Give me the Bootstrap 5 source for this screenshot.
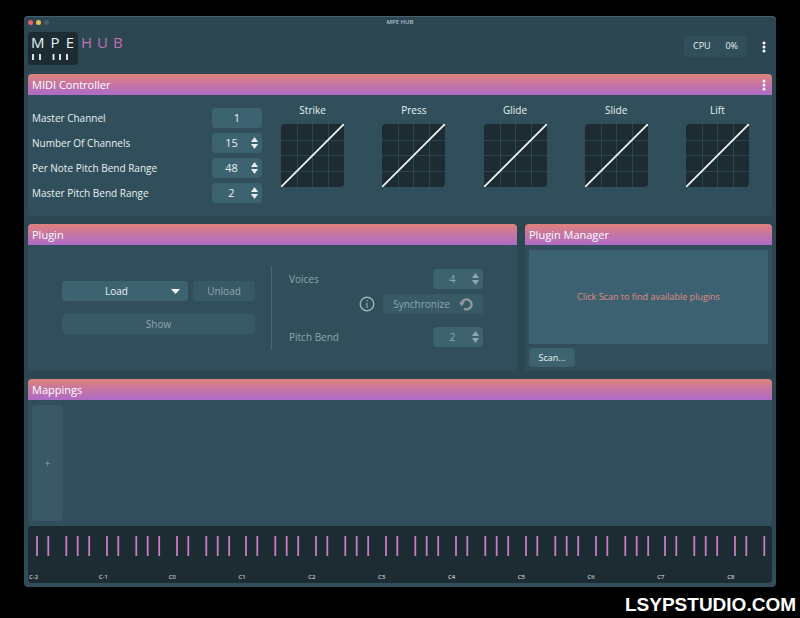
<!DOCTYPE html>
<html lang="en">
<head>
<meta charset="utf-8">
<meta name="viewport" content="width=device-width, initial-scale=1">
<title>MPE HUB</title>
<link rel="stylesheet" href="https://cdn.jsdelivr.net/npm/bootstrap@5.3.0/dist/css/bootstrap.min.css">
<style>
  :root { --ink:#e8f1f3; --dim:#8fa6ae; --field:#3d6370; --field-dim:#385a66; --panel:#304f5a; --shell:#2c4751; --dark:#1d2b32; }
  body { background:#000; color:var(--ink); font:10px/20px "Open Sans", "Noto Sans", sans-serif; }
  button, input, select { font:inherit; color:inherit; border:0; padding:0; background:none; }
  .stage { min-height:100vh; padding:16px 24px 0 24px; }
  .shell { background:linear-gradient(var(--shell) 90%, #304f5a); border-radius:4px; padding:0 4px 4px; box-shadow:inset 0 1px 0 #46616b; }
  .titlebar { height:12px; font-size:6px; line-height:12px; font-weight:600; display:grid; grid-template-columns:1fr auto 1fr; align-items:center; color:#b4c2c7; }
  .dots { gap:3px; }
  .dots i { width:5px; height:5px; border-radius:50%; }
  .brandbar { height:46px; padding-top:4px; }
  .logo-key { width:50px; height:33px; border-radius:4px; background:var(--dark); padding:0 4px 0 3px; }
  .logo-word { font:400 15px/21px "Open Sans", sans-serif; }
  .hub { margin:0 0 0 3px; gap:5px; color:#c070b4; }
  .cpu { height:21px; width:63px; border-radius:4px; background:var(--panel); padding:0 9px; font-size:9px; margin-right:13px; }
  .dots-btn { width:8px; height:14px; line-height:0; }
  .panel-box { background:var(--panel); border-radius:4px; overflow:hidden; }
  .panel-head { height:21px; padding:0 4px; background:linear-gradient(#e0817b, #c575a3 50%, #ae6bc8); color:#fff; }
  .panel-head h2 { font-size:11px; line-height:21px; font-weight:400; margin:0; }
  .stack { gap:8px; }
  .midi { height:121px; padding:13px 4px 0; }
  .params { width:230px; gap:5px; }
  .spin, .solo { width:50px; height:20px; border-radius:4px; background:var(--field); font-size:11px; }
  .solo { text-align:center; }
  .spin input { width:39px; height:20px; text-align:center; }
  .steps { width:7px; }
  .steps button { height:7px; line-height:0; display:block; }
  .curve { font-size:10px; margin-top:-8px; }
  .curve svg { display:block; margin-top:4px; }
  .duo { display:grid; grid-template-columns:489fr 247fr; }
  .plugin-body { height:126px; padding:21px 34px 0; }
  .loader { width:193px; padding-top:15px; gap:13px; }
  .pick { display:grid; width:126px; }
  .pick > * { grid-area:1/1; }
  .pick select { appearance:none; height:20px; border-radius:4px; background:var(--field); text-align:center; text-align-last:center; padding-right:17px; }
  .pick svg { justify-self:end; align-self:center; margin-right:8px; pointer-events:none; }
  .flat { height:20px; border-radius:4px; background:var(--field-dim); }
  .unload { width:62px; }
  .dim { color:var(--dim); }
  .rule { width:1px; height:84px; background:#4a6872; margin:0 17px 0 16px; }
  .voices { width:194px; padding-top:3px; }
  .voices .sync-row { margin:5px 0 13px; gap:8px; }
  .sync { width:100px; gap:9px; }
  .manager { height:126px; padding:5px 4px 0; }
  .found { height:94px; background:#3c6170; color:#e08c84; font-size:9px; }
  .scan { width:46px; height:19px; line-height:19px; margin-top:4px; border-radius:4px; background:var(--field); font-size:9px; }
  .maps { height:126px; padding:5px 4px 0; }
  .add { width:31px; height:116px; border-radius:4px; background:#385965; }
  .keys { height:57px; border-radius:4px; background:var(--dark); padding-top:10px; }
  .octave { flex:70 1 0; min-width:0; font-size:6px; line-height:10px; }
  .octave:last-child { flex-grow:46; }
  .octave svg { display:block; margin-bottom:16px; }
  .octave span { padding-left:1px; }
  .site { font:700 19px/31px "Liberation Sans", Arial, sans-serif; color:#fff; margin-right:-20px; padding-top:2px; }
</style>
<script src="https://cdn.jsdelivr.net/npm/bootstrap@5.3.0/dist/js/bootstrap.bundle.min.js"></script>
</head>
<body>
<svg width="0" height="0" class="position-absolute" aria-hidden="true">
  <symbol id="up" viewBox="0 0 7 5"><path d="M0 5 3.5 0 7 5z" fill="currentColor"/></symbol>
  <symbol id="down" viewBox="0 0 7 5"><path d="M0 0h7L3.5 5z" fill="currentColor"/></symbol>
  <symbol id="more" viewBox="0 0 4 12"><g fill="#fff"><circle cx="2" cy="1.9" r="1.5"/><circle cx="2" cy="6" r="1.5"/><circle cx="2" cy="10.1" r="1.5"/></g></symbol>
  <symbol id="linear" viewBox="0 0 63 63"><rect width="63" height="63" rx="4" fill="#1d2b32"/><path d="M16.5 0v63M31.5 0v63M47.5 0v63M0 16.5h63M0 31.5h63M0 47.5h63" stroke="#2b464e"/><path d="M.5 62.5 62.5.5" stroke="#eef4f5" stroke-width="1.8" stroke-linecap="round"/></symbol>
</svg>
<div class="stage">
  <main class="shell">
    <div class="titlebar">
      <div class="dots d-flex"><i style="background:#e0666a"></i><i style="background:#e9bd50"></i><i style="background:#46606a"></i></div>
      <span>MPE HUB</span>
    </div>
    <header class="brandbar d-flex align-items-start">
      <div class="logo-key">
        <div class="logo-word d-flex justify-content-between"><span>M</span><span>P</span><span>E</span></div>
        <svg class="d-block" width="42" height="8" viewBox="0 0 42 8"><path d="M2 1v6M9 1v6M22.5 1v6M29 1v6M36 1v6" stroke="#eef4f5" stroke-width="1.8"/></svg>
      </div>
      <div class="logo-word hub d-flex"><span>H</span><span>U</span><span>B</span></div>
      <div class="d-flex align-items-center ms-auto pe-1 mt-1 pt-0">
        <div class="cpu d-flex justify-content-between"><span>CPU</span><span>0%</span></div>
        <button class="dots-btn" aria-label="Application menu"><svg width="4" height="12"><use href="#more"/></svg></button>
      </div>
    </header>
    <div class="stack d-flex flex-column">
      <section class="panel-box">
        <div class="panel-head d-flex justify-content-between align-items-center"><h2>MIDI Controller</h2><button class="dots-btn" aria-label="Controller menu"><svg width="4" height="12"><use href="#more"/></svg></button></div>
        <div class="midi d-flex">
          <div class="params d-flex flex-column">
            <div class="d-flex justify-content-between"><label for="mc">Master Channel</label><input class="solo" id="mc" value="1"></div>
            <div class="d-flex justify-content-between"><label for="nc">Number Of Channels</label><div class="spin d-flex align-items-center"><input id="nc" value="15"><div class="steps"><button aria-label="More channels"><svg width="7" height="5"><use href="#up"/></svg></button><button aria-label="Fewer channels"><svg width="7" height="5"><use href="#down"/></svg></button></div></div></div>
            <div class="d-flex justify-content-between"><label for="nr">Per Note Pitch Bend Range</label><div class="spin d-flex align-items-center"><input id="nr" value="48"><div class="steps"><button aria-label="Raise note range"><svg width="7" height="5"><use href="#up"/></svg></button><button aria-label="Lower note range"><svg width="7" height="5"><use href="#down"/></svg></button></div></div></div>
            <div class="d-flex justify-content-between"><label for="mr">Master Pitch Bend Range</label><div class="spin d-flex align-items-center"><input id="mr" value="2"><div class="steps"><button aria-label="Raise master range"><svg width="7" height="5"><use href="#up"/></svg></button><button aria-label="Lower master range"><svg width="7" height="5"><use href="#down"/></svg></button></div></div></div>
          </div>
          <div class="d-flex flex-fill">
            <div class="curve col d-flex flex-column align-items-center"><span>Strike</span><svg width="63" height="63"><use href="#linear"/></svg></div>
            <div class="curve col d-flex flex-column align-items-center"><span>Press</span><svg width="63" height="63"><use href="#linear"/></svg></div>
            <div class="curve col d-flex flex-column align-items-center"><span>Glide</span><svg width="63" height="63"><use href="#linear"/></svg></div>
            <div class="curve col d-flex flex-column align-items-center"><span>Slide</span><svg width="63" height="63"><use href="#linear"/></svg></div>
            <div class="curve col d-flex flex-column align-items-center"><span>Lift</span><svg width="63" height="63"><use href="#linear"/></svg></div>
          </div>
        </div>
      </section>
      <div class="duo gap-2">
        <section class="panel-box">
          <div class="panel-head"><h2>Plugin</h2></div>
          <div class="plugin-body d-flex">
            <div class="loader d-flex flex-column">
              <div class="d-flex justify-content-between">
                <div class="pick"><select aria-label="Plugin"><option>Load</option></select><svg width="9" height="5" viewBox="0 0 9 5"><path d="M0 0h9L4.500 5z" fill="#fff"/></svg></div>
                <button class="flat unload dim">Unload</button>
              </div>
              <button class="flat dim">Show</button>
            </div>
            <div class="rule"></div>
            <div class="voices dim">
              <div class="d-flex justify-content-between"><label for="vo">Voices</label><div class="spin d-flex align-items-center"><input id="vo" value="4"><div class="steps"><button aria-label="More voices"><svg width="7" height="5"><use href="#up"/></svg></button><button aria-label="Fewer voices"><svg width="7" height="5"><use href="#down"/></svg></button></div></div></div>
              <div class="sync-row d-flex justify-content-end align-items-center">
                <svg width="16" height="16" viewBox="0 0 16 16" fill="none" stroke="#9db3ba"><circle cx="8" cy="8" r="6.800" stroke-width="1.400"/><path d="M8 6.800V12" stroke-width="1.100"/><circle cx="8" cy="4.800" r=".7" fill="#9db3ba" stroke="none"/></svg>
                <button class="flat sync d-flex justify-content-center align-items-center">Synchronize<svg width="14" height="14" viewBox="0 0 14 14"><path d="M2.600 6.800A5 5 0 1 1 5 11.700" fill="none" stroke="#909a9f" stroke-width="2.300"/><path d="M0 5.500h5.800L2.600 9.300z" fill="#909a9f"/></svg></button>
              </div>
              <div class="d-flex justify-content-between"><label for="pb">Pitch Bend</label><div class="spin d-flex align-items-center"><input id="pb" value="2"><div class="steps"><button aria-label="Raise pitch bend"><svg width="7" height="5"><use href="#up"/></svg></button><button aria-label="Lower pitch bend"><svg width="7" height="5"><use href="#down"/></svg></button></div></div></div>
            </div>
          </div>
        </section>
        <section class="panel-box">
          <div class="panel-head"><h2>Plugin Manager</h2></div>
          <div class="manager">
            <div class="found d-flex justify-content-center align-items-center">Click Scan to find available plugins</div>
            <button class="scan d-block">Scan...</button>
          </div>
        </section>
      </div>
      <section class="panel-box">
        <div class="panel-head"><h2>Mappings</h2></div>
        <div class="maps"><button class="add dim" aria-label="Add mapping">+</button></div>
      </section>
    </div>
    <div class="keys d-flex" id="keys"></div>
  </main>
  <footer class="site text-end">LSYPSTUDIO.COM</footer>
</div>
<script>
  // One block per octave, with a stroke for each black key.
  const blackKeys = [9, 20.300, 38.300, 49.700, 61.200];
  const keys = document.getElementById('keys');
  for (let n = -2; n <= 8; n++) {
    const last = n === 8;
    const marks = blackKeys.slice(0, last ? 3 : 5).map(x => `M${x} 0v20`).join('');
    keys.insertAdjacentHTML('beforeend',
      `<div class="octave"><svg width="${last ? 44 : 68}" height="20"><path d="${marks}" stroke="#c87cc4" stroke-width="1.800"/></svg><span>C${n}</span></div>`);
  }
</script>
</body>
</html>
